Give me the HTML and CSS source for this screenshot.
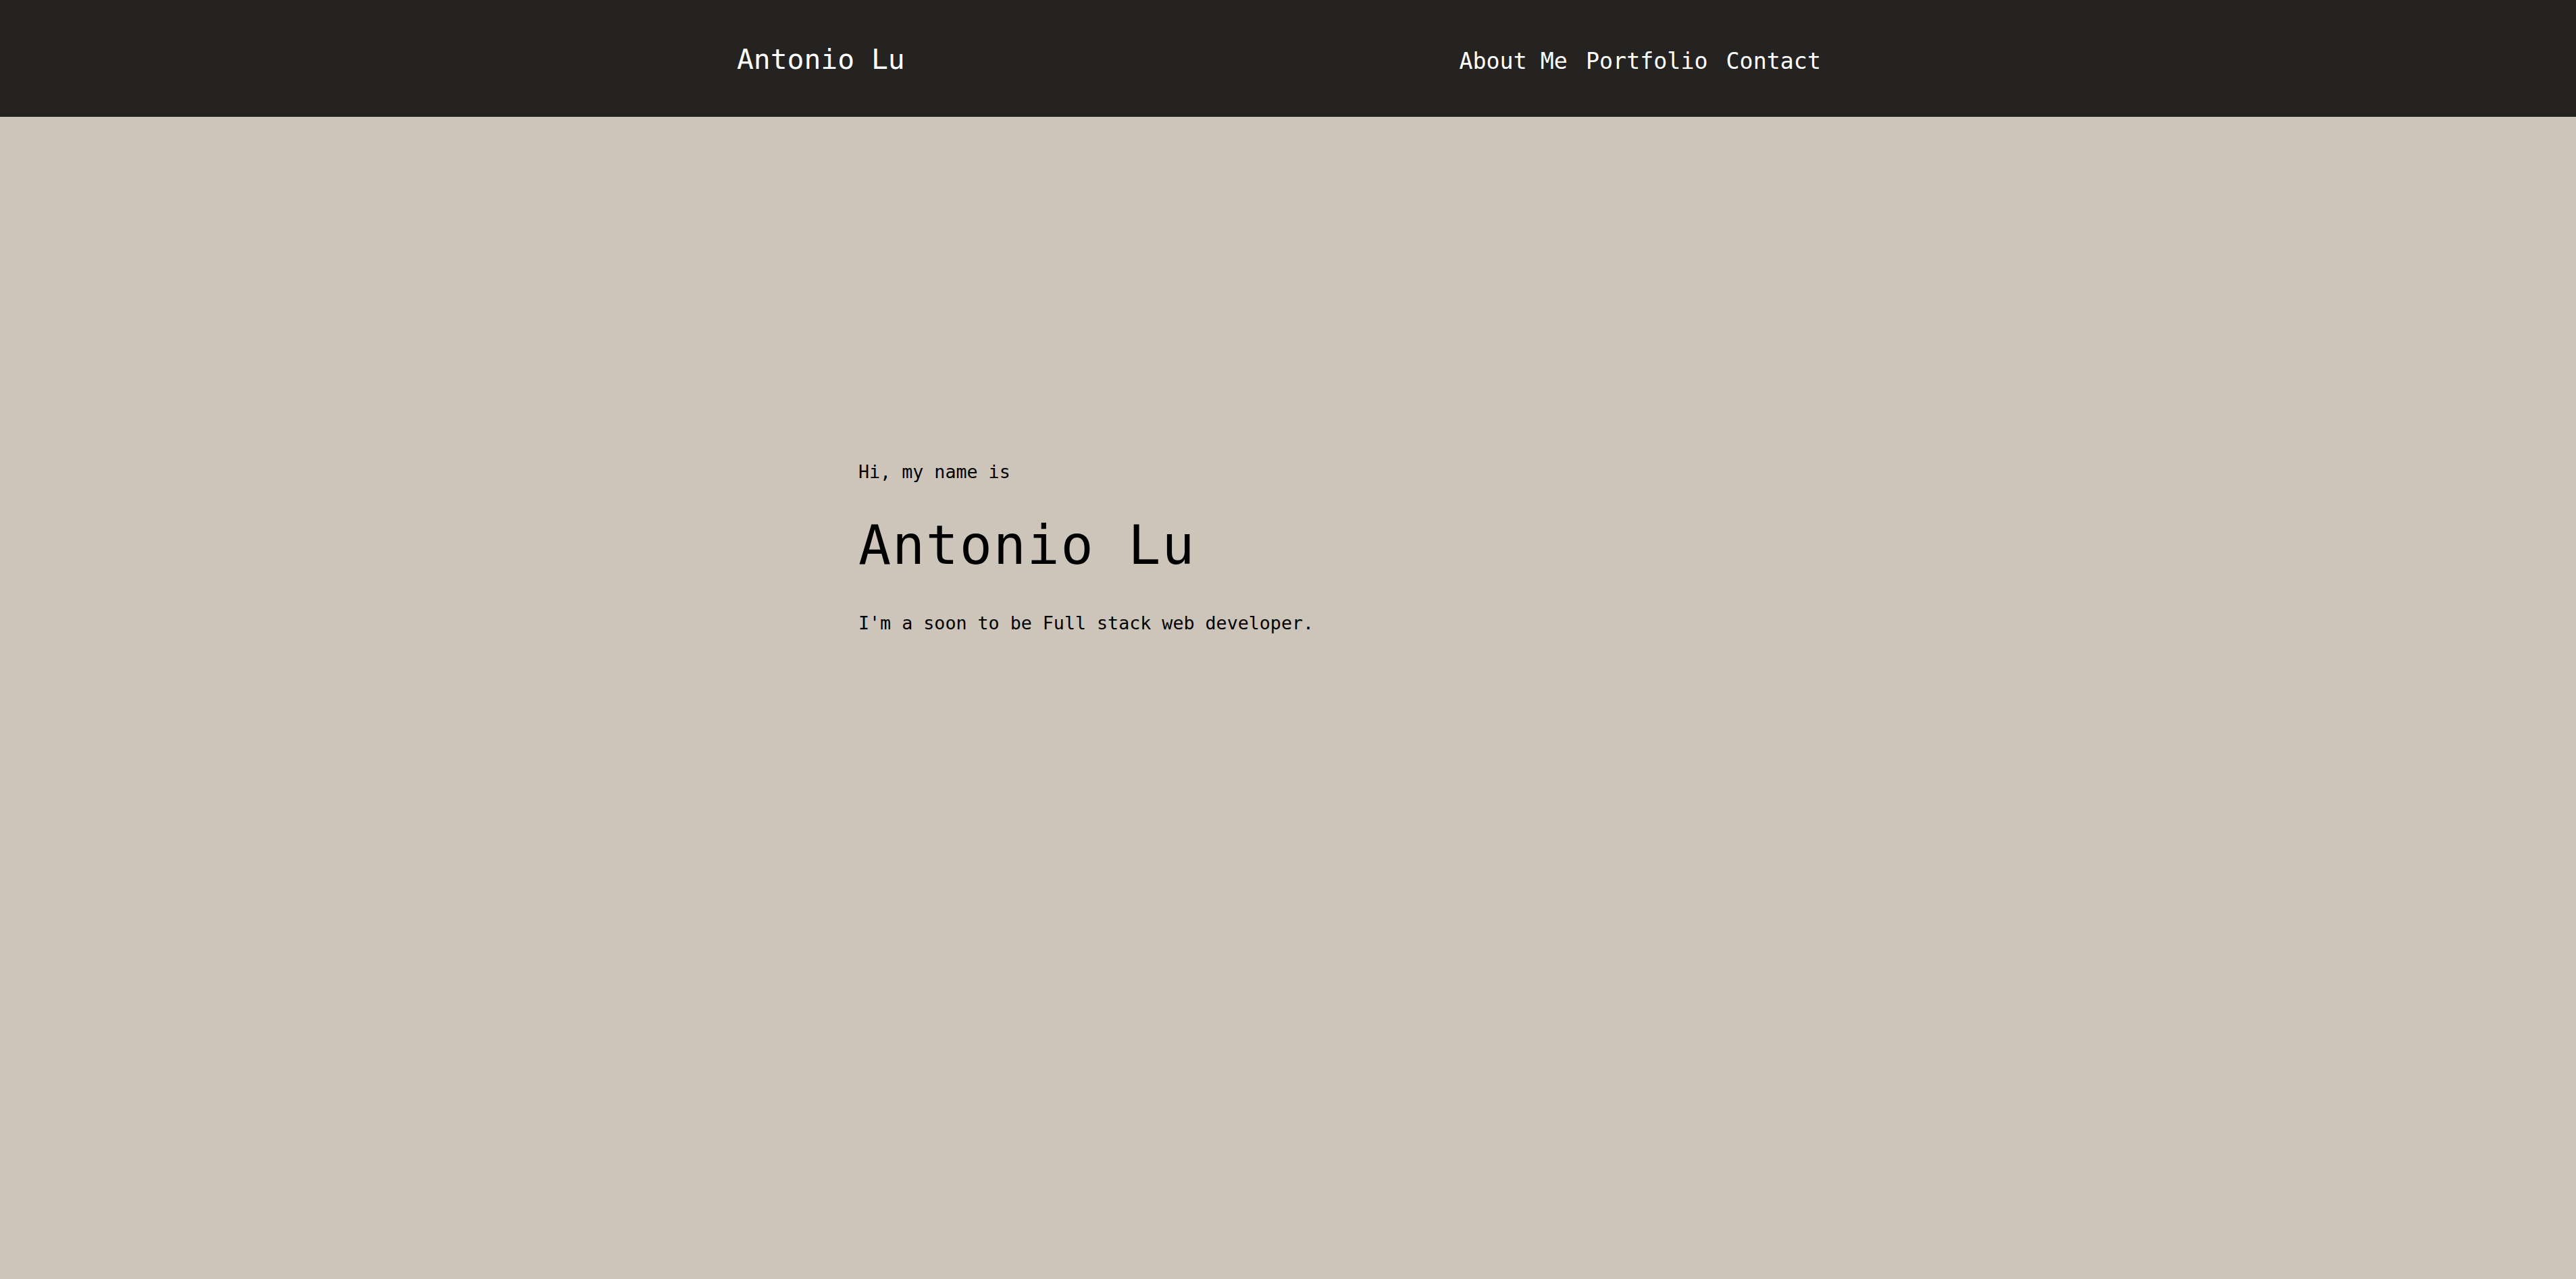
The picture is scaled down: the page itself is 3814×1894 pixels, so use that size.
FILE: index.html
```html
<!DOCTYPE html>
<html lang="en">
<head>
<meta charset="utf-8">
<title>Antonio Lu</title>
<link rel="stylesheet" href="styles.css">
</head>
<body>
<header class="site-header">
  <div class="header-inner">
    <a class="brand" href="#">Antonio Lu</a>
    <nav class="nav">
      <a class="nav-link" href="#about">About Me</a>
      <a class="nav-link" href="#portfolio">Portfolio</a>
      <a class="nav-link" href="#contact">Contact</a>
    </nav>
  </div>
</header>
<main class="hero">
  <p class="hero-intro">Hi, my name is</p>
  <h1 class="hero-name">Antonio Lu</h1>
  <p class="hero-text">I'm a soon to be Full stack web developer.</p>
</main>
</body>
</html>
```

FILE: styles.css
```css
html, body {
  margin: 0;
  padding: 0;
}

body {
  background: #cdc5b9;
  font-family: "DejaVu Sans Mono", monospace;
  color: #000;
  min-height: 1894px;
}

.site-header {
  background: #242321;
  height: 173px;
  box-sizing: border-box;
  padding-top: 64px;
}

.header-inner {
  width: 1605px;
  margin-left: 1091px;
  display: flex;
  justify-content: space-between;
  align-items: baseline;
}

.brand {
  color: #fff;
  text-decoration: none;
  font-size: 41.3px;
  line-height: normal;
}

.nav {
  display: flex;
  gap: 27px;
}

.nav-link {
  color: #fff;
  text-decoration: none;
  font-size: 33.33px;
  line-height: normal;
}

.hero {
  padding-top: 510px;
  padding-left: 1271px;
}

.hero-intro {
  margin: 0;
  font-size: 26.67px;
  line-height: normal;
}

.hero-name {
  margin: 46.5px 0 53.3px;
  font-size: 80px;
  font-weight: normal;
  letter-spacing: 1.75px;
  line-height: normal;
}

.hero-text {
  margin: 0;
  font-size: 26.67px;
  line-height: normal;
}
```
